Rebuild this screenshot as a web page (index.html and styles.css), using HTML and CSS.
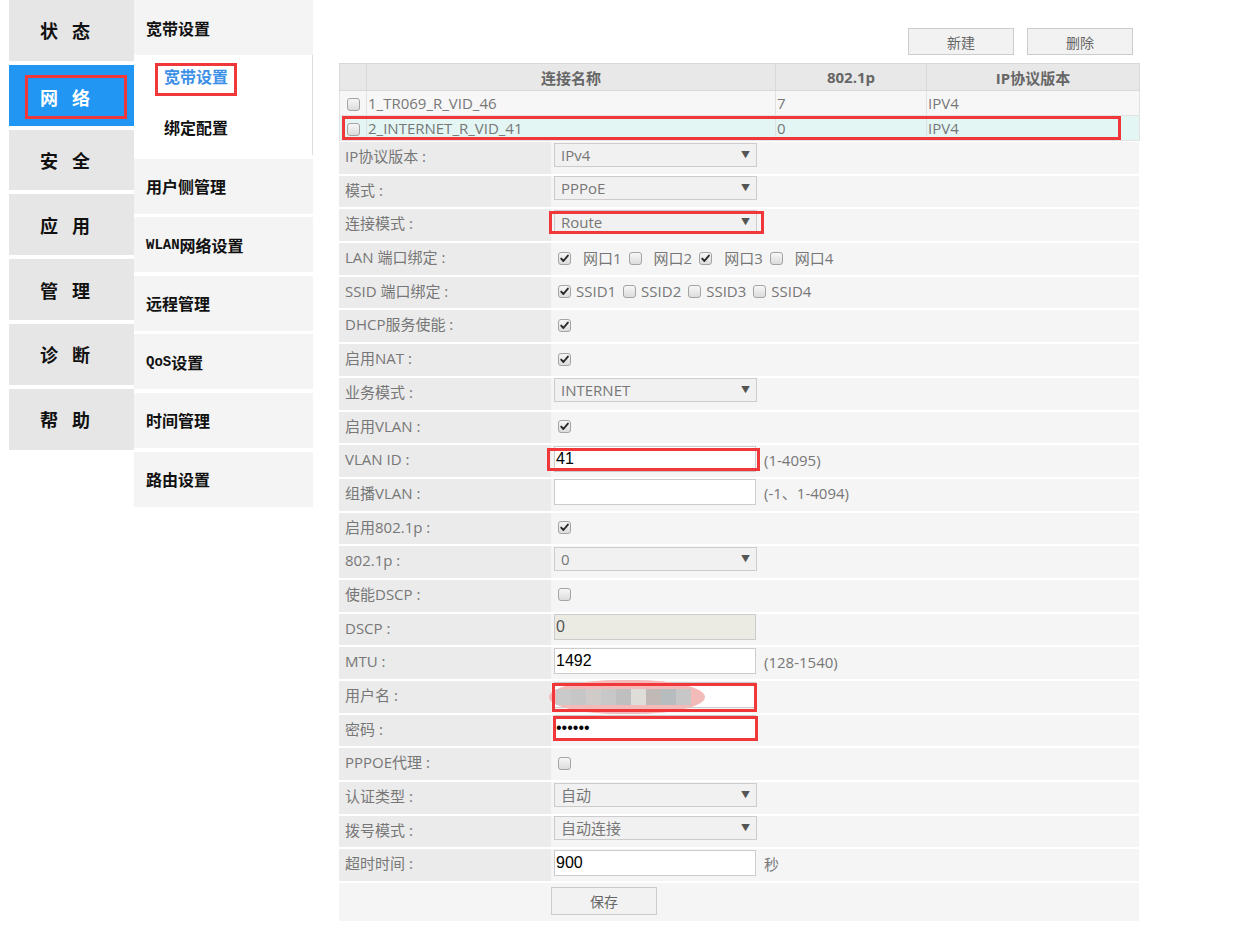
FILE: index.html
```html
<!DOCTYPE html>
<html lang="zh-CN">
<head>
<meta charset="utf-8">
<title>宽带设置</title>
<link rel="stylesheet" href="styles.css">
</head>
<body>
<div class="page">
  <nav class="nav1">
    <div class="nav1-item">状态</div>
    <div class="nav1-item active"><span class="nav1-mark">网络</span></div>
    <div class="nav1-item">安全</div>
    <div class="nav1-item">应用</div>
    <div class="nav1-item">管理</div>
    <div class="nav1-item">诊断</div>
    <div class="nav1-item">帮助</div>
  </nav>

  <nav class="nav2">
    <div class="nav2-head">宽带设置</div>
    <div class="nav2-sub">
      <div class="sub-item"><span class="sub-active">宽带设置</span></div>
      <div class="sub-item sub-plain">绑定配置</div>
    </div>
    <div class="nav2-item">用户侧管理</div>
    <div class="nav2-item"><span class="lat">WLAN</span>网络设置</div>
    <div class="nav2-item">远程管理</div>
    <div class="nav2-item"><span class="lat">QoS</span>设置</div>
    <div class="nav2-item">时间管理</div>
    <div class="nav2-item">路由设置</div>
  </nav>

  <main class="main">
    <div class="toolbar">
      <button class="btn">新建</button>
      <button class="btn">删除</button>
    </div>

    <div class="table-wrap">
      <table class="conn">
        <colgroup>
          <col class="c-cb"><col class="c-name"><col class="c-p"><col class="c-ip">
        </colgroup>
        <thead>
          <tr><th></th><th>连接名称</th><th>802.1p</th><th>IP协议版本</th></tr>
        </thead>
        <tbody>
          <tr class="r1"><td class="cbcell"><span class="cb"></span></td><td>1_TR069_R_VID_46</td><td>7</td><td>IPV4</td></tr>
          <tr class="r2"><td class="cbcell"><span class="cb"></span></td><td>2_INTERNET_R_VID_41</td><td>0</td><td>IPV4</td></tr>
        </tbody>
      </table>
      <span class="mark mark-row"></span>
    </div>

    <div class="form">
      <div class="row"><div class="lbl">IP协议版本 :</div><div class="val"><div class="sel"><span>IPv4</span><span class="arr">▼</span></div></div></div>
      <div class="row"><div class="lbl">模式 :</div><div class="val"><div class="sel"><span>PPPoE</span><span class="arr">▼</span></div></div></div>
      <div class="row"><div class="lbl">连接模式 :</div><div class="val"><div class="sel"><span>Route</span><span class="arr">▼</span></div><span class="mark mark-route"></span></div></div>
      <div class="row"><div class="lbl">LAN 端口绑定 :</div><div class="val">
        <span class="cb on"><svg viewBox="0 0 11 11"><path d="M2.2 5.6 L4.4 8 L8.9 2.6"/></svg></span><span class="opt lan">网口1</span>
        <span class="cb"></span><span class="opt lan">网口2</span>
        <span class="cb on"><svg viewBox="0 0 11 11"><path d="M2.2 5.6 L4.4 8 L8.9 2.6"/></svg></span><span class="opt lan">网口3</span>
        <span class="cb"></span><span class="opt lan">网口4</span>
      </div></div>
      <div class="row"><div class="lbl">SSID 端口绑定 :</div><div class="val">
        <span class="cb on"><svg viewBox="0 0 11 11"><path d="M2.2 5.6 L4.4 8 L8.9 2.6"/></svg></span><span class="opt ssid">SSID1</span>
        <span class="cb"></span><span class="opt ssid">SSID2</span>
        <span class="cb"></span><span class="opt ssid">SSID3</span>
        <span class="cb"></span><span class="opt ssid">SSID4</span>
      </div></div>
      <div class="row"><div class="lbl">DHCP服务使能 :</div><div class="val"><span class="cb on"><svg viewBox="0 0 11 11"><path d="M2.2 5.6 L4.4 8 L8.9 2.6"/></svg></span></div></div>
      <div class="row"><div class="lbl">启用NAT :</div><div class="val"><span class="cb on"><svg viewBox="0 0 11 11"><path d="M2.2 5.6 L4.4 8 L8.9 2.6"/></svg></span></div></div>
      <div class="row"><div class="lbl">业务模式 :</div><div class="val"><div class="sel"><span>INTERNET</span><span class="arr">▼</span></div></div></div>
      <div class="row"><div class="lbl">启用VLAN :</div><div class="val"><span class="cb on"><svg viewBox="0 0 11 11"><path d="M2.2 5.6 L4.4 8 L8.9 2.6"/></svg></span></div></div>
      <div class="row"><div class="lbl">VLAN ID :</div><div class="val"><input class="inp" type="text" value="41"><span class="hint">(1-4095)</span><span class="mark mark-vlan"></span></div></div>
      <div class="row"><div class="lbl">组播VLAN :</div><div class="val"><input class="inp" type="text" value=""><span class="hint">(-1、1-4094)</span></div></div>
      <div class="row"><div class="lbl">启用802.1p :</div><div class="val"><span class="cb on"><svg viewBox="0 0 11 11"><path d="M2.2 5.6 L4.4 8 L8.9 2.6"/></svg></span></div></div>
      <div class="row"><div class="lbl">802.1p :</div><div class="val"><div class="sel"><span>0</span><span class="arr">▼</span></div></div></div>
      <div class="row"><div class="lbl">使能DSCP :</div><div class="val"><span class="cb"></span></div></div>
      <div class="row"><div class="lbl">DSCP :</div><div class="val"><input class="inp inp-dis" type="text" value="0" disabled></div></div>
      <div class="row"><div class="lbl">MTU :</div><div class="val"><input class="inp" type="text" value="1492"><span class="hint">(128-1540)</span></div></div>
      <div class="row"><div class="lbl">用户名 :</div><div class="val"><input class="inp" type="text" value="">
        <div class="blur"><span class="px" style="background:#cacaca"></span><span class="px" style="background:#c6c6c6"></span><span class="px" style="background:#d0cac8"></span><span class="px" style="background:#c8c8c8"></span><span class="px" style="background:#bfbfbf"></span><span class="px" style="background:#dfddd8"></span><span class="px" style="background:#c1b9b5"></span><span class="px" style="background:#b7bdbe"></span><span class="px" style="background:#c7c7c7"></span></div>
        <span class="mark mark-user"></span></div></div>
      <div class="row"><div class="lbl">密码 :</div><div class="val"><input class="inp" type="password" value="123456"><span class="mark mark-pass"></span></div></div>
      <div class="row"><div class="lbl">PPPOE代理 :</div><div class="val"><span class="cb"></span></div></div>
      <div class="row"><div class="lbl">认证类型 :</div><div class="val"><div class="sel"><span>自动</span><span class="arr">▼</span></div></div></div>
      <div class="row"><div class="lbl">拨号模式 :</div><div class="val"><div class="sel"><span>自动连接</span><span class="arr">▼</span></div></div></div>
      <div class="row"><div class="lbl">超时时间 :</div><div class="val"><input class="inp" type="text" value="900"><span class="hint">秒</span></div></div>
      <div class="save-row"><button class="btn btn-save">保存</button></div>
    </div>
  </main>
</div>
</body>
</html>
```

FILE: styles.css
```css
* { box-sizing: border-box; }

body {
  margin: 0;
  background: #ffffff;
  font-family: "Open Sans", "Noto Sans CJK SC", sans-serif;
  color: #777777;
}

.page {
  display: flex;
  align-items: flex-start;
}

/* ---------- first level navigation ---------- */
.nav1 {
  margin-left: 9px;
  width: 125px;
  display: flex;
  flex-direction: column;
  gap: 4px;
}

.nav1-item {
  height: 60.8px;
  background: #e6e6e6;
  display: flex;
  align-items: center;
  padding-left: 31px;
  font-family: "Noto Sans CJK SC", sans-serif;
  font-weight: 700;
  font-size: 18px;
  line-height: 20px;
  letter-spacing: 14px;
  color: #111111;
}

.nav1-item.active {
  background: #2196f3;
  color: #ffffff;
  padding-left: 16px;
}

.nav1-mark {
  display: inline-block;
  border: 3px solid #f0383a;
  padding: 9px 20px 9px 12px;
  margin-top: 3px;
}

/* ---------- second level navigation ---------- */
.nav2 {
  width: 179px;
  display: flex;
  flex-direction: column;
  font-family: "Liberation Mono", "Noto Sans CJK SC", monospace;
  font-weight: 700;
  font-size: 16px;
  color: #111111;
}

.nav2-head {
  height: 55px;
  background: #f4f4f4;
  padding-left: 12px;
  display: flex;
  align-items: center;
}

.nav2-sub {
  margin-left: 12px;
  height: 100px;
  background: #ffffff;
  border-right: 1px solid #dddddd;
  padding-top: 8px;
}

.sub-active {
  display: inline-block;
  margin-left: 9px;
  border: 3px solid #f0383a;
  padding: 4px 6px;
  line-height: 19px;
  color: #3b8fe6;
}

.sub-plain {
  padding-left: 18px;
  margin-top: 24px;
  line-height: 20px;
}

.nav2-item {
  height: 55px;
  margin-top: 3.6px;
  background: #f4f4f4;
  padding-left: 12px;
  display: flex;
  align-items: center;
}

.lat {
  font-size: 14px;
}

/* ---------- main area ---------- */
.main {
  margin-left: 26px;
  width: 800px;
  padding-top: 28px;
}

.toolbar {
  display: flex;
  justify-content: flex-end;
  gap: 13px;
  padding-right: 6px;
  margin-bottom: 8px;
}

.btn {
  width: 106px;
  height: 27px;
  background: #f2f2f2;
  border: 1px solid #cccccc;
  color: #666666;
  font-family: "Open Sans", "Noto Sans CJK SC", sans-serif;
  font-size: 14px;
  padding: 0;
}

.table-wrap {
  position: relative;
}

.conn {
  width: 800px;
  table-layout: fixed;
  border-collapse: collapse;
  font-size: 15px;
}

.c-cb { width: 27px; }
.c-name { width: 409px; }
.c-p { width: 151px; }
.c-ip { width: 213px; }

.conn th {
  height: 27px;
  background: #e8e8e8;
  border: 1px solid #d8d8d8;
  color: #666666;
  font-weight: 700;
  text-align: center;
  padding: 0;
}

.conn td {
  height: 25px;
  border: 1px solid #e2e2e2;
  padding: 0 0 0 1px;
  white-space: nowrap;
  line-height: 23px;
}

.conn .r1 td { background: #f7f7f7; }
.conn .r2 td { background: #e3f6f4; }

.conn td.cbcell {
  padding: 0;
  text-align: center;
}

.conn td.cbcell .cb {
  margin: 0;
  vertical-align: middle;
}

/* ---------- form ---------- */
.form {
  margin-top: 1px;
}

.row {
  display: grid;
  grid-template-columns: 212px 1fr;
  height: 31.7px;
  margin-bottom: 2px;
  font-size: 15px;
}

.lbl {
  background: #ebebeb;
  padding-left: 6px;
  line-height: 28px;
  white-space: nowrap;
}

.val {
  position: relative;
  background: #f5f5f5;
  display: flex;
  align-items: flex-start;
  padding-top: 0.5px;
  white-space: nowrap;
}

.sel {
  width: 203px;
  height: 24px;
  margin-left: 3px;
  border: 1px solid #cccccc;
  background: #f1f1f1;
  display: flex;
  align-items: center;
  justify-content: space-between;
  padding: 0 6px 0 6px;
  color: #777777;
  line-height: 22px;
}

.arr {
  font-size: 9px;
  color: #555555;
}

.inp {
  width: 202px;
  height: 26px;
  margin: 0 0 0 3px;
  border: 1px solid #cccccc;
  background: #ffffff;
  padding: 0 1px;
  font-family: "Liberation Sans", sans-serif;
  font-size: 16px;
  color: #000000;
  outline: none;
}

.inp-dis {
  background: #ebebe4;
  color: #555555;
}

.hint {
  margin-left: 8px;
  line-height: 28px;
}

.cb {
  display: inline-block;
  flex: none;
  width: 13px;
  height: 13px;
  margin: 8px 0 0 7px;
  border: 1px solid #a4a4a4;
  border-radius: 3px;
  background: linear-gradient(#f7f7f7, #dcdcdc);
}

.cb svg {
  display: block;
  width: 11px;
  height: 11px;
}

.cb svg path {
  fill: none;
  stroke: #2a2a2a;
  stroke-width: 1.9;
  stroke-linecap: round;
  stroke-linejoin: round;
}

.opt {
  line-height: 28px;
}

.opt.lan { margin-left: 12px; }
.opt.ssid { margin-left: 5px; }

.blur {
  position: absolute;
  left: -2px;
  top: -1.5px;
  width: 156px;
  height: 34px;
  border-radius: 45% / 50%;
  background: #f3baba;
  display: flex;
  align-items: center;
  padding-left: 7px;
}

.px {
  width: 15px;
  height: 16px;
}

.save-row {
  height: 38px;
  background: #f5f5f5;
  padding: 4px 0 0 212px;
}

.btn-save {
  height: 28px;
}

/* ---------- red annotation boxes ---------- */
.mark {
  position: absolute;
  border: 3px solid #f0383a;
  pointer-events: none;
}

.mark-row { left: 3px; top: 52.5px; width: 779px; height: 24.5px; }
.mark-route { left: -2px; top: 1.6px; width: 215px; height: 23.5px; }
.mark-vlan { left: -3.7px; top: 3px; width: 213px; height: 23px; }
.mark-user { left: 0.7px; top: 2px; width: 205px; height: 29px; }
.mark-pass { left: 1.7px; top: 1.7px; width: 205px; height: 25px; }
```
